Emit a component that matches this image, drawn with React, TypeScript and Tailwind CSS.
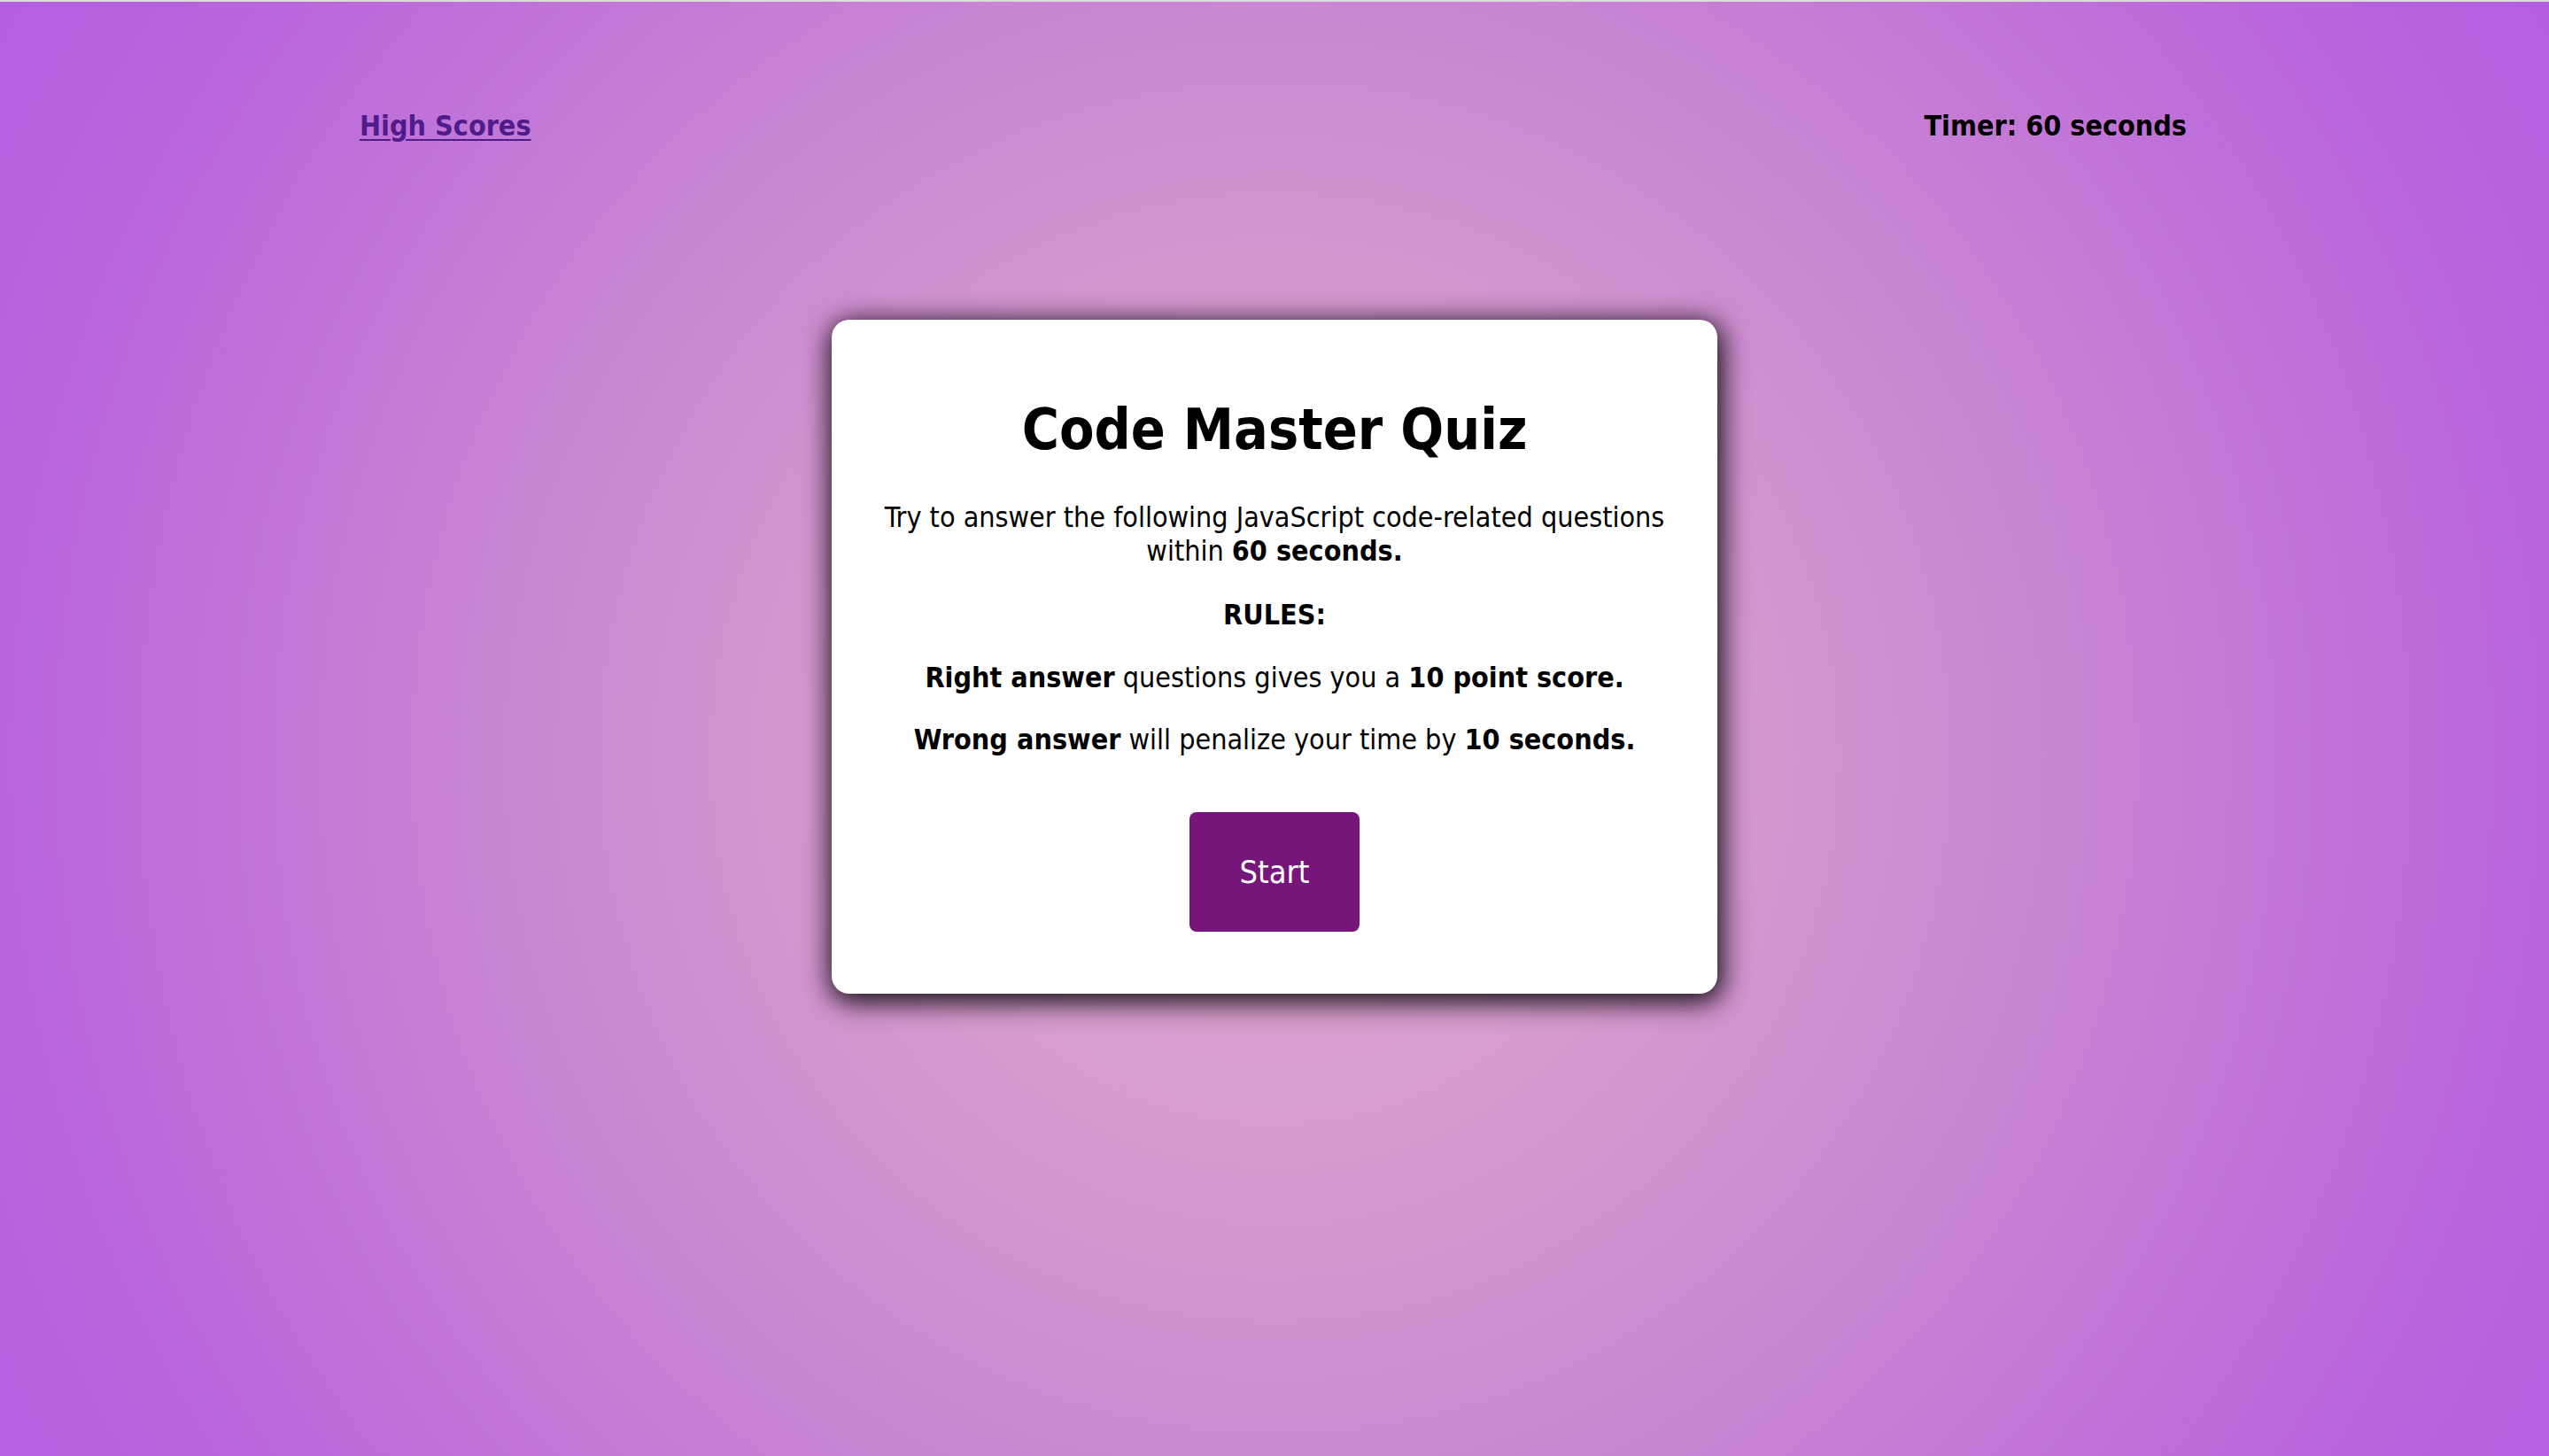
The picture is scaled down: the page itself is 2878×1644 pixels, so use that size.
import React from "react";

export default function App() {
  return (
    <div className="min-h-[1644px] w-full border-t-2 border-[#dcdcdc] bg-[radial-gradient(circle_at_50%_52%,#dca4ce_0%,#d89ccf_25%,#cb88d2_50%,#b963dc_87%,#b55ee0_100%)] font-['DejaVu_Sans_Condensed','DejaVu_Sans',sans-serif] text-black">
      <header className="flex items-center justify-between pl-[406px] pr-[409px] pt-[121px] text-[32px] leading-[38px] font-bold">
        <a href="#" className="text-[#4f1c8c] underline decoration-2 underline-offset-[4px]">
          High Scores
        </a>
        <div>Timer: 60 seconds</div>
      </header>

      <main className="mx-auto mt-[200px] flex w-[1000px] flex-col items-center rounded-[20px] bg-white pt-[86px] pb-[70px] text-center shadow-[2px_6px_30px_4px_rgba(0,0,0,0.9)]">
        <h1 className="text-[64px] leading-[76px] font-bold">Code Master Quiz</h1>
        <p className="mt-[42px] text-[32px] leading-[38px]">
          <span className="whitespace-nowrap">Try to answer the following JavaScript code-related questions</span>
          <br />
          within <b>60 seconds.</b>
        </p>
        <p className="mt-[34px] text-[32px] leading-[38px] font-bold">RULES:</p>
        <p className="mt-[33px] text-[32px] leading-[38px] whitespace-nowrap">
          <b>Right answer</b> questions gives you a <b>10 point score.</b>
        </p>
        <p className="mt-[32px] text-[32px] leading-[38px] whitespace-nowrap">
          <b>Wrong answer</b> will penalize your time by <b>10 seconds.</b>
        </p>
        <button className="mt-[63px] flex h-[135px] w-[192px] items-center justify-center rounded-[8px] bg-[#76157a] text-[36px] text-white">
          Start
        </button>
      </main>
    </div>
  );
}
